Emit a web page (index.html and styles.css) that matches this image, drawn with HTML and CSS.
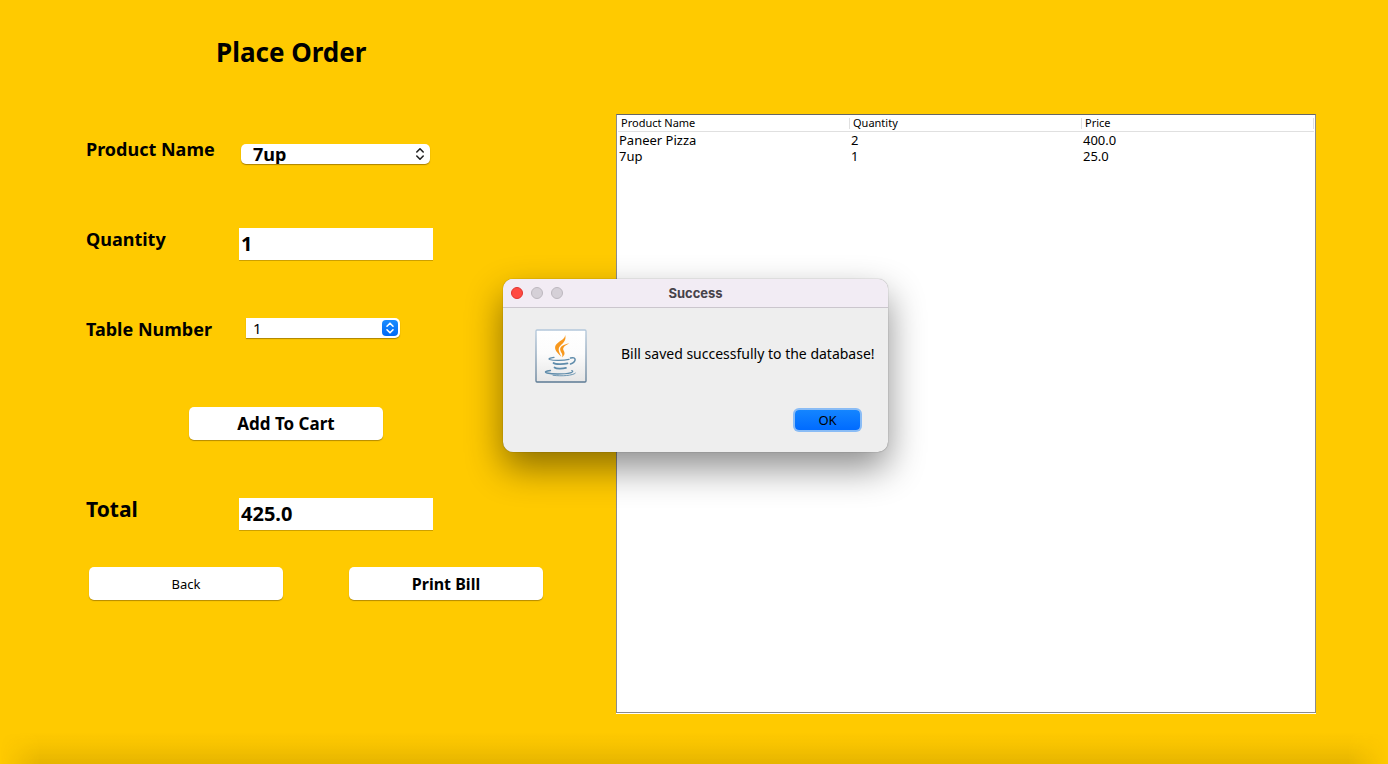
FILE: index.html
```html
<!DOCTYPE html>
<html lang="en">
<head>
<meta charset="utf-8">
<title>Place Order</title>
<link rel="stylesheet" href="styles.css">
</head>
<body>
<main class="page">
  <form class="order">
    <h1 class="title">Place Order</h1>
    <div class="row">
      <label class="label" for="product">Product Name</label>
      <div class="picker picker-wide">
        <select class="select select-bold" id="product"><option>7up</option><option>Paneer Pizza</option></select>
        <svg class="arrows" viewBox="0 0 16 16" fill="none" stroke="#222" stroke-width="1.6" stroke-linecap="round" stroke-linejoin="round"><path d="M4.8 6 8 2.8 11.2 6M4.8 10 8 13.2 11.2 10"/></svg>
      </div>
    </div>
    <div class="row">
      <label class="label" for="quantity">Quantity</label>
      <input class="field" id="quantity" type="text" value="1">
    </div>
    <div class="row row-level">
      <label class="label" for="table-number">Table Number</label>
      <div class="picker picker-narrow">
        <select class="select" id="table-number"><option>1</option><option>2</option></select>
        <svg class="arrows arrows-blue" viewBox="0 0 16 16" fill="none" stroke="#fff" stroke-width="1.6" stroke-linecap="round" stroke-linejoin="round"><path d="M5 6.2 8 3.2 11 6.2M5 9.8 8 12.8 11 9.8"/></svg>
      </div>
    </div>
    <div class="row row-center">
      <button class="button button-large" type="button">Add To Cart</button>
    </div>
    <div class="row">
      <label class="label label-large" for="total">Total</label>
      <input class="field" id="total" type="text" value="425.0">
    </div>
    <div class="actions">
      <button class="button button-plain" type="button">Back</button>
      <button class="button" type="button">Print Bill</button>
    </div>
  </form>

  <section class="cart">
    <table class="items">
      <thead><tr><th>Product Name</th><th>Quantity</th><th>Price</th></tr></thead>
      <tbody>
        <tr><td>Paneer Pizza</td><td>2</td><td>400.0</td></tr>
        <tr><td>7up</td><td>1</td><td>25.0</td></tr>
      </tbody>
    </table>
  </section>
</main>

<div class="bottom-shade"></div>

<div class="dialog" role="dialog" aria-labelledby="dialog-title">
  <header class="titlebar">
    <div class="lights">
      <button class="light light-close" type="button" aria-label="Close"></button>
      <button class="light" type="button" aria-label="Minimize" disabled></button>
      <button class="light" type="button" aria-label="Zoom" disabled></button>
    </div>
    <h2 class="dialog-title" id="dialog-title">Success</h2>
  </header>
  <div class="message">
    <svg class="java" viewBox="0 0 52 54" fill="none" aria-hidden="true">
      <defs>
        <linearGradient id="paper" x1="0" y1="0" x2="0" y2="1"><stop offset="0" stop-color="#fff"/><stop offset=".45" stop-color="#fcfcfc"/><stop offset="1" stop-color="#e6e6e6"/></linearGradient>
        <linearGradient id="edge" x1="0" y1="0" x2="0" y2="1"><stop offset="0" stop-color="#b4c8db"/><stop offset="1" stop-color="#5c7a94"/></linearGradient>
      </defs>
      <rect x="1" y="1" width="50" height="52" rx="1" fill="url(#paper)" stroke="url(#edge)" stroke-width="1.3"/>
      <g fill="#f8981d">
        <path d="M30.100 6c1.500 5-1.500 7.500-4.700 10.700-2.700 2.800-2 5.300 1 11-4.300-3.800-7.900-7.600-5.600-11.600 2.600-4.300 9.300-5.200 9.300-10.100z"/>
        <path d="M34.300 14.600c-4.500 2-6.800 4.100-5.900 6.500 1.300 2.700 2.200 4.300-1.300 7.300.9-3.100-.5-4.200-1.500-6.200-1.900-4 2.600-6.900 8.700-7.600z"/>
      </g>
      <g stroke="#5f8cab" stroke-linecap="round">
        <path d="M19 28.300c-4 .6-6 1.500-4.400 2.200 4 1.300 14 1.100 19.400-.2" stroke-width="1.300"/>
        <path d="M35.500 29c6-1.700 6.300 3.800 0 6" stroke-width="1.500"/>
        <path d="M18.500 34c1.800 1.500 9.500 1.500 14 .4M19.500 38.500c1.800 1.400 7.500 1.500 11.500.4" stroke-width="1.700"/>
        <path d="M15.500 41.500c-5 .4-6.500 1.800-3.500 2.500 7 1.700 22 1.100 25-.8 1.200-.8.800-1.300-.2-1.600" stroke-width="1.300"/>
        <path d="M18 46.300c9 1.200 20 .2 22.300-2.100" stroke-width=".9"/>
      </g>
    </svg>
    <p class="message-text">Bill saved successfully to the database!</p>
  </div>
  <div class="dialog-actions"><button class="ok" type="button">OK</button></div>
</div>
</body>
</html>
```

FILE: styles.css
```css
* {
  box-sizing: border-box;
}

body {
  margin: 0;
  position: relative;
  min-height: 100vh;
  background: #ffca00;
  color: #000;
  font-family: "Noto Sans", "Open Sans", sans-serif;
}

button,
input,
select {
  font: inherit;
  color: inherit;
}

.page {
  display: grid;
  grid-template-columns: 457px minmax(0, 1fr);
  column-gap: 73px;
  min-height: 100vh;
  padding: 0 72px 51px 86px;
}

.title {
  margin: 0 0 0 130px;
  height: 104px;
  font-size: 26px;
  line-height: 104px;
  font-weight: 700;
}

.row {
  display: flex;
  align-items: center;
  height: 90px;
  padding-top: 9px;
}

.row-level {
  padding-top: 0;
}

.row-center {
  padding-left: 103px;
}

.label {
  width: 153px;
  padding-bottom: 9px;
  font-size: 18px;
  line-height: 24px;
  font-weight: 700;
}

.row-level .label {
  padding-bottom: 0;
}

.label-large {
  font-size: 21px;
}

.picker {
  display: flex;
  position: relative;
}

.picker-wide {
  width: 189px;
  margin-left: 2px;
}

.picker-narrow {
  width: 154px;
  margin-left: 7px;
  margin-bottom: 2px;
}

.select {
  appearance: none;
  flex: 1;
  height: 20px;
  border: 0;
  border-radius: 0 5px 5px 0;
  padding: 0 28px 0 7px;
  background: #fff;
  box-shadow: 0 1px 1px rgba(90, 60, 0, 0.5);
  font-size: 15px;
  line-height: 20px;
}

.select-bold {
  border-radius: 5px;
  padding-left: 12px;
  font-size: 18px;
  font-weight: 700;
}

.arrows {
  position: absolute;
  top: 2px;
  right: 2px;
  width: 16px;
  height: 16px;
  pointer-events: none;
}

.arrows-blue {
  border-radius: 4px;
  background: linear-gradient(#1a8cff, #0069f5);
}

.field {
  width: 194px;
  height: 32px;
  border: 0;
  border-radius: 0;
  padding: 0 2px;
  background: #fff;
  box-shadow: 0 1px 0 rgba(90, 60, 0, 0.3);
  font-size: 20px;
  font-weight: 700;
}

.button {
  width: 194px;
  height: 33px;
  border: 0;
  border-radius: 5px;
  padding: 0;
  background: #fff;
  box-shadow: 0 1px 1px rgba(90, 60, 0, 0.45);
  font-size: 16px;
  font-weight: 700;
}

.button-large {
  font-size: 17px;
}

.button-plain {
  font-size: 13px;
  font-weight: 400;
}

.actions {
  display: flex;
  justify-content: space-between;
  padding: 13px 0 0 3px;
}

.cart {
  margin-top: 114px;
  border: 1px solid #8c8c8c;
  border-top-color: #666;
  padding: 0 1px;
  background: #fff;
  box-shadow: 0 1px 0 #fff;
}

.items {
  width: 100%;
  border-collapse: separate;
  border-spacing: 0;
  table-layout: fixed;
}

.items th {
  height: 17px;
  border-bottom: 1px solid #e0e0e0;
  padding: 0 0 0 3px;
  background: linear-gradient(#e0e0e0, #e0e0e0) right 3px / 1px 11px no-repeat;
  text-align: left;
  font-size: 11px;
  line-height: 16px;
  font-weight: 400;
}

.items td {
  height: 16px;
  padding: 0 1px;
  font-size: 13px;
  line-height: 16px;
}

.bottom-shade {
  position: absolute;
  left: 0;
  right: 0;
  bottom: 0;
  height: 32px;
  background: linear-gradient(rgba(60, 40, 0, 0), rgba(60, 40, 0, 0.04) 40%, rgba(60, 40, 0, 0.13));
  mask-image: linear-gradient(90deg, transparent, #000 40px, #000 calc(100% - 40px), transparent);
  pointer-events: none;
}

.dialog {
  position: absolute;
  top: 279px;
  left: calc(50% - 191px);
  width: 385px;
  border-radius: 10px;
  padding-bottom: 22px;
  background: #eee;
  box-shadow: 0 0 1px rgba(0, 0, 0, 0.6), 0 16px 36px rgba(0, 0, 0, 0.45);
}

.titlebar {
  display: grid;
  grid-template-columns: 1fr auto 1fr;
  align-items: center;
  height: 29px;
  border-bottom: 1px solid #cbc6cd;
  border-radius: 10px 10px 0 0;
  padding: 0 8px;
  background: #f2ecf4;
}

.lights {
  display: flex;
  gap: 8px;
}

.light {
  width: 12px;
  height: 12px;
  border: 1px solid #bdb8bf;
  border-radius: 50%;
  padding: 0;
  background: #d5d0d7;
}

.light-close {
  border-color: #e2332e;
  background: #ff4a42;
}

.dialog-title {
  margin: 0;
  color: #47434a;
  font-family: Inter, sans-serif;
  font-size: 13px;
  line-height: 16px;
  font-weight: 700;
}

.message {
  display: flex;
  align-items: center;
  gap: 34px;
  padding: 21px 12px 0 32px;
}

.java {
  flex: none;
  width: 52px;
  height: 54px;
}

.message-text {
  margin: 0;
  padding-bottom: 4px;
  font-size: 14px;
  line-height: 18px;
  white-space: nowrap;
}

.dialog-actions {
  display: flex;
  justify-content: flex-end;
  padding: 27px 28px 0 0;
}

.ok {
  width: 65px;
  height: 20px;
  border: 0;
  border-radius: 4px;
  padding: 0;
  background: linear-gradient(#1485ff, #006bff);
  box-shadow: 0 0 0 2px #8abcf5;
  font-size: 13px;
  line-height: 20px;
}
```
